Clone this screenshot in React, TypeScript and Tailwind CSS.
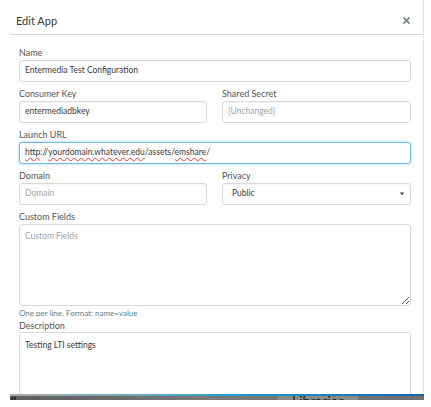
import clsx from "clsx";

const FONT = { fontFamily: "Lato, 'Open Sans', sans-serif" };

function Label({ children }: { children: React.ReactNode }) {
  return (
    <div className="h-[13.5px] text-[9px] leading-[13.5px] text-[#555]">
      {children}
    </div>
  );
}

function Field({
  value,
  placeholder,
  focused = false,
  children,
}: {
  value?: string;
  placeholder?: string;
  focused?: boolean;
  children?: React.ReactNode;
}) {
  return (
    <div
      className={clsx(
        "flex h-[22px] items-center rounded-[3px] border bg-white px-[5px] text-[8.5px]",
        focused
          ? "border-[#73b8ea] shadow-[0_0_3px_rgba(102,175,233,0.6)]"
          : "border-[#d9d9d9] shadow-[inset_0_1px_1px_rgba(0,0,0,0.04)]"
      )}
    >
      {children ?? (
        <span className={value ? "text-[#3a3a3a]" : "text-[#a3a3a3]"}>
          {value || placeholder}
        </span>
      )}
    </div>
  );
}

function Squiggle({ children }: { children: React.ReactNode }) {
  return (
    <span className="underline decoration-wavy decoration-[#e03a3a] decoration-[1px] underline-offset-[2px]">
      {children}
    </span>
  );
}

export default function App() {
  return (
    <div className="h-[407px] w-[431px] overflow-hidden bg-white" style={FONT}>
      <div className="h-[394px] w-[424px] overflow-hidden border-r border-[#e4e4e4]">
        {/* header */}
        <div className="ml-[10px] flex h-[35px] items-center justify-between border-b border-[#d9d9d9] pl-[6px] pr-[13px] pt-[8px]">
          <span className="text-[11px] text-[#3a3a3a]">Edit App</span>
          <svg width="7" height="7" viewBox="0 0 8 8" className="mb-[1px]">
            <path
              d="M1 1 L7 7 M7 1 L1 7"
              stroke="#6f7f8b"
              strokeWidth="1.8"
              strokeLinecap="round"
            />
          </svg>
        </div>

        <div className="ml-[19px] mt-[11px] w-[392px]">
          <Label>Name</Label>
          <Field value="Entermedia Test Configuration" />

          <div className="mt-[5.5px] flex gap-[15px]">
            <div className="w-[188px]">
              <Label>Consumer Key</Label>
              <Field value="entermediadbkey" />
            </div>
            <div className="flex-1">
              <Label>Shared Secret</Label>
              <Field placeholder="[Unchanged]" />
            </div>
          </div>

          <div className="mt-[5.5px]">
            <Label>Launch URL</Label>
            <Field focused>
              <span className="text-[#3a3a3a]">
                <Squiggle>http</Squiggle>://
                <Squiggle>yourdomain.whatever.edu</Squiggle>/assets/
                <Squiggle>emshare</Squiggle>/
              </span>
            </Field>
          </div>

          <div className="mt-[5.5px] flex gap-[15px]">
            <div className="w-[188px]">
              <Label>Domain</Label>
              <Field placeholder="Domain" />
            </div>
            <div className="flex-1">
              <Label>Privacy</Label>
              <Field>
                <div className="flex w-full items-center justify-between pl-[4px] pr-[1px]">
                  <span className="text-[#3a3a3a]">Public</span>
                  <svg width="4" height="4" viewBox="0 0 5 4">
                    <path d="M0 0 H5 L2.5 3.5 Z" fill="#333" />
                  </svg>
                </div>
              </Field>
            </div>
          </div>

          <div className="mt-[5.5px]">
            <Label>Custom Fields</Label>
            <textarea
              readOnly
              placeholder="Custom Fields"
              className="block h-[82px] w-full resize-y rounded-[3px] border border-[#d9d9d9] px-[5px] py-[5px] text-[8.5px] leading-[12px] text-[#333] placeholder:text-[#a3a3a3] focus:outline-none"
            />
            <div className="mt-[1px] h-[12px] text-[8px] leading-[12px] text-[#5b7e95]">
              One per line. Format: name=value
            </div>
          </div>

          <div>
            <Label>Description</Label>
            <div className="h-[80px] rounded-[3px] border border-[#d9d9d9] px-[5px] py-[6px] text-[8.5px] leading-[12px] text-[#3a3a3a]">
              Testing LTI settings
            </div>
          </div>
        </div>
      </div>

      {/* strip of the window behind */}
      <div className="ml-[10px] h-[6px] w-[414px] overflow-hidden">
        <div className="h-[2px] bg-gradient-to-r from-[#b0aaa2] via-[#20a3c9] to-[#1e63ad]" />
        <div className="flex h-[4px] bg-gradient-to-r from-[#5e5e5e] via-[#7a7a7a] to-[#6f6f6f]">
          <div className="flex gap-[1px] pl-[1px] pt-[1px]">
            <div className="h-[3px] w-[2px] bg-[#2c2c2c]" />
            <div className="h-[3px] w-[2px] bg-[#2c2c2c]" />
          </div>
          <div className="ml-[262px] w-[80px] bg-[#8a8a8a] pl-[14px]">
            <span className="block text-[14px] leading-[10px] text-[#222]">
              Libraries
            </span>
          </div>
        </div>
      </div>
    </div>
  );
}
